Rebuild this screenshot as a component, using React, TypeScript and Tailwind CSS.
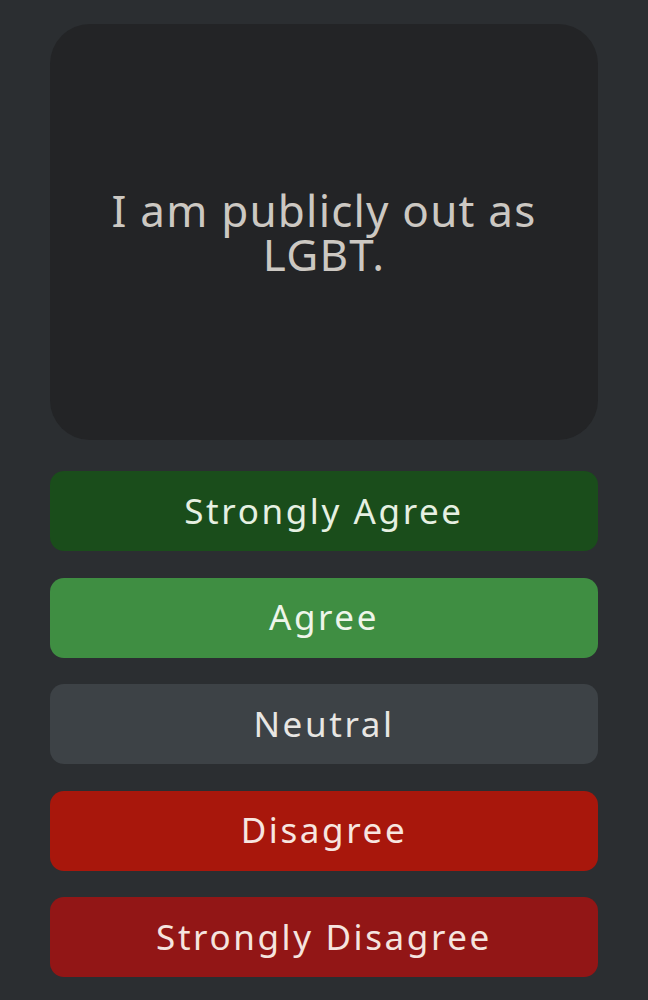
const options = [
  { label: "Strongly Agree", className: "bg-[#1a4d1b] text-[#e6f0e2]" },
  { label: "Agree", className: "bg-[#3f8e42] text-[#eef5ea]" },
  { label: "Neutral", className: "bg-[#3d4246] text-[#e8e6e3]" },
  { label: "Disagree", className: "bg-[#a8170c] text-[#f7e6e0]" },
  { label: "Strongly Disagree", className: "bg-[#921616] text-[#f5e4df]" },
];

export default function App() {
  return (
    <div className="min-h-[1000px] bg-[#2b2e31] px-[50px] pt-[24px] font-['Noto_Sans',sans-serif]">
      <div className="h-[416px] rounded-[40px] bg-[#232426] flex items-center justify-center px-10">
        <p className="text-center text-[44px] leading-[44px] text-[#ccc8c2] tracking-[1.2px]">
          I am publicly out as LGBT.
        </p>
      </div>
      <div className="mt-[31px] flex flex-col gap-[26.5px]">
        {options.map((o) => (
          <button
            key={o.label}
            type="button"
            className={`h-[80px] w-full rounded-[14px] text-[35px] tracking-[2.6px] ${o.className}`}
          >
            {o.label}
          </button>
        ))}
      </div>
    </div>
  );
}
